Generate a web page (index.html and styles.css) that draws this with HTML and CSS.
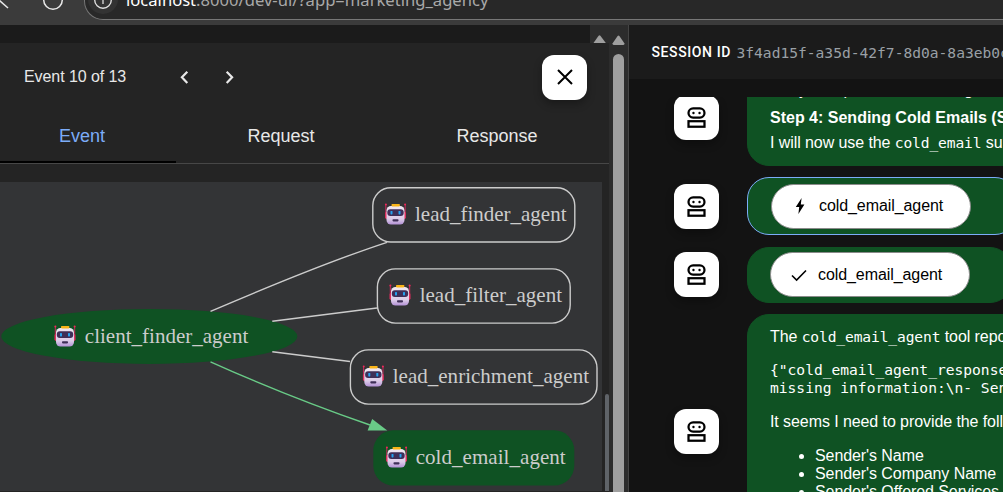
FILE: index.html
```html
<!DOCTYPE html>
<html lang="en">
<head>
  <meta charset="UTF-8">
  <title>Agent Development Kit Dev UI</title>
  <link rel="stylesheet" href="styles.css">
</head>
<body>

  <!-- shared icons -->
  <svg class="defs" width="0" height="0">
    <symbol id="bot" viewBox="0 0 24 24">
      <rect x="4.9" y="3.9" width="14.2" height="8.2" rx="4.1" fill="none" stroke="#000" stroke-width="2"/>
      <circle cx="9.3" cy="8" r="1.05"/>
      <circle cx="14.7" cy="8" r="1.05"/>
      <rect x="4.9" y="15.3" width="14.2" height="4.9" fill="none" stroke="#000" stroke-width="2"/>
    </symbol>
    <symbol id="robot" viewBox="0 0 22 22">
      <path d="M1.3 1v14M20.7 1v14" stroke="#c9285c" stroke-width="1"/>
      <circle cx="1.4" cy="1.6" r="1" fill="#f0285a"/>
      <circle cx="20.6" cy="1.6" r="1" fill="#f0285a"/>
      <rect x=".6" y="9" width="3" height="7" rx="1.4" fill="#e0305f"/>
      <rect x="18.4" y="9" width="3" height="7" rx="1.4" fill="#e0305f"/>
      <rect x="2" y="3" width="18" height="18.5" rx="4.5" fill="url(#face)"/>
      <rect x="7" y="1" width="8.4" height="2.4" rx=".8" fill="#f9b418"/>
      <rect x="2.8" y="6.3" width="16.4" height="6.6" rx="3" fill="#3f2f58"/>
      <rect x="6" y="8" width="2" height="3.4" rx=".6" fill="#25a2f0"/>
      <rect x="14" y="8" width="2" height="3.4" rx=".6" fill="#25a2f0"/>
      <rect x="8" y="16.2" width="6" height="2.2" rx=".8" fill="#3f2f58"/>
    </symbol>
    <linearGradient id="face" x1="0" y1="0" x2="0" y2="1">
      <stop offset="0" stop-color="#f1e8f2"/>
      <stop offset=".7" stop-color="#dccbe8"/>
      <stop offset="1" stop-color="#b391d6"/>
    </linearGradient>
  </svg>

  <header class="browser-bar">
    <svg class="nav-icons" width="84" height="25" fill="none" stroke="#e8e8e8" stroke-width="1.5">
      <path d="M-1 0L8 8"/>
      <circle cx="53" cy="0" r="9.3"/>
    </svg>
    <div class="url-bar">
      <svg class="info" width="36" height="19">
        <circle cx="18" cy="-1" r="15" fill="#333"/>
        <circle cx="18" cy="0" r="8.3" fill="none" stroke="#ddd" stroke-width="1.4"/>
        <path d="M18 -1V4" stroke="#ddd" stroke-width="1.3"/>
      </svg>
      <span class="url"><b>localhost</b>:8000/dev-ui/?app=marketing_agency</span>
    </div>
  </header>

  <main class="app">
    <section class="side">
      <div class="side-top">
        <div class="scroll-up"><svg width="19" height="18"><path d="M3.5 18L8.6 10.8Q9.5 9.8 10.4 10.8L15.8 18z" fill="#9f9f9f"/></svg></div>
      </div>

      <div class="event-nav">
        <span class="event-count">Event 10 of 13</span>
        <svg class="chevron" width="10" height="14" viewBox="0 0 10 14"><path d="M8.3 1.7L2.9 7.3L8.3 13"/></svg>
        <svg class="chevron" width="10" height="14" viewBox="0 0 10 14"><path d="M2.7 1.7L8.1 7.3L2.7 13"/></svg>
        <button class="close"><svg width="16" height="16" viewBox="0 0 16 16"><path d="M1 1L15 15M15 1L1 15" stroke="#000" stroke-width="2"/></svg></button>
      </div>

      <nav class="tabs">
        <a class="tab active">Event</a>
        <a class="tab">Request</a>
        <a class="tab">Response</a>
      </nav>

      <div class="graph">
        <svg width="602" height="309" viewBox="0 182 602 309">
          <ellipse class="filled" cx="149.3" cy="336.4" rx="148" ry="27.5"/>
          <g class="edges">
            <path d="M210.5 311.4C265 288 330 261 387 242.3"/>
            <path d="M272.3 321.2L377 308"/>
            <path d="M272.3 351.8L350 361.5"/>
            <path class="active-edge" d="M210.5 361.8C262 385 315 406 370 425"/>
          </g>
          <path class="arrow" d="M372.2 419L367.6 430.6L387.3 430.6z"/>
          <g class="nodes">
            <rect x="372.8" y="187.8" width="202" height="54.2" rx="18"/>
            <rect x="377.4" y="268.9" width="192.8" height="54.2" rx="18"/>
            <rect x="350.4" y="349.9" width="246.6" height="54.2" rx="18"/>
          </g>
          <rect class="filled" x="373.3" y="430.3" width="201" height="55.3" rx="20"/>

          <use href="#robot" x="54" y="325" width="22" height="22"/>
          <use href="#robot" x="384.5" y="203" width="22" height="22"/>
          <use href="#robot" x="389" y="284" width="22" height="22"/>
          <use href="#robot" x="362.3" y="365" width="22" height="22"/>
          <use href="#robot" x="385.5" y="446" width="22" height="22"/>

          <g class="labels">
            <text x="84.8" y="343" textLength="163.5">client_finder_agent</text>
            <text x="415" y="221.3" textLength="151.5">lead_finder_agent</text>
            <text x="419.7" y="302.3" textLength="142.3">lead_filter_agent</text>
            <text x="392.7" y="383.3" textLength="196.3">lead_enrichment_agent</text>
            <text x="415.7" y="464.3" textLength="150">cold_email_agent</text>
          </g>
        </svg>
        <span class="inner-thumb"></span>
      </div>
    </section>

    <div class="scrollbar">
      <svg width="19" height="28"><path d="M3.5 18.5L8.6 11Q9.5 9.8 10.4 11L15.5 18.5Q15.5 20 14 20H5Q3.5 20 3.5 18.5z" fill="#9f9f9f"/></svg>
      <div class="thumb"></div>
    </div>

    <section class="chat">
      <div class="session">
        <span class="session-label">SESSION ID</span>
        <span class="session-id">3f4ad15f-a35d-42f7-8d0a-8a3eb0c1</span>
      </div>

      <div class="messages">
        <div class="message first">
          <div class="avatar"><svg width="27" height="27"><use href="#bot"/></svg></div>
          <div class="bubble wide intro">
            <p>Okay, this process will change now.</p>
            <p><strong>Step 4: Sending Cold Emails (Sub-agent)</strong></p>
            <p>I will now use the <code>cold_email</code> sub-agent.</p>
          </div>
        </div>

        <div class="message call">
          <div class="avatar"><svg width="27" height="27"><use href="#bot"/></svg></div>
          <div class="bubble selected">
            <div class="pill">
              <svg width="18" height="18" viewBox="0 0 18 18"><path d="M10.6 1L4.8 10H8.2L7.4 17L13.4 7.6H9.8z"/></svg>
              cold_email_agent
            </div>
          </div>
        </div>

        <div class="message result">
          <div class="avatar"><svg width="27" height="27"><use href="#bot"/></svg></div>
          <div class="bubble">
            <div class="pill">
              <svg width="18" height="18" viewBox="0 0 18 18"><path d="M2 9.5L6.6 14L16 4.5" fill="none" stroke="#000" stroke-width="1.6"/></svg>
              cold_email_agent
            </div>
          </div>
        </div>

        <div class="message reply">
          <div class="avatar"><svg width="27" height="27"><use href="#bot"/></svg></div>
          <div class="bubble wide">
            <p>The <code>cold_email_agent</code> tool reported:</p>
            <pre>{"cold_email_agent_response":
missing information:\n- Sender</pre>
            <p>It seems I need to provide the following:</p>
            <ul>
              <li>Sender's Name</li>
              <li>Sender's Company Name</li>
              <li>Sender's Offered Services</li>
            </ul>
          </div>
        </div>
      </div>
    </section>
  </main>

</body>
</html>
```

FILE: styles.css
```css
* {
  box-sizing: border-box;
}

body {
  margin: 0;
  height: 492px;
  display: flex;
  flex-direction: column;
  overflow: hidden;
  background: #131313;
  color: #e8e8e8;
  font-family: "Liberation Sans", Arial, sans-serif;
  font-size: 16px;
}

.defs {
  position: absolute;
}

svg {
  display: block;
  flex: none;
}

/* Browser bar */
.browser-bar {
  display: flex;
  flex: none;
  height: 25px;
  background: #3b3b3b;
}

.url-bar {
  flex: 1;
  display: flex;
  height: 20px;
  margin-right: -20px;
  background: #282828;
  border: 1px solid #777;
  border-top: 0;
  border-bottom-left-radius: 19px;
  overflow: hidden;
}

.url {
  margin: -13px 0 0 5px;
  font-family: "Noto Sans", sans-serif;
  font-size: 16.6px;
  line-height: 26px;
  color: #a9a9a9;
  white-space: nowrap;
}

.url b {
  font-weight: normal;
  color: #fff;
}

.app {
  flex: 1;
  display: flex;
  min-height: 0;
}

/* Event panel */
.side {
  width: 609px;
  flex: none;
  background: #242424;
}

.side-top {
  display: flex;
  justify-content: flex-end;
  height: 18px;
  background: #1b1b1b;
}

.scroll-up {
  background: #2c2c2c;
}

.event-nav {
  display: flex;
  align-items: center;
  height: 68px;
  padding: 0 22px 0 24px;
}

.event-count {
  width: 155px;
  letter-spacing: -0.08px;
}

.chevron {
  margin-right: 35px;
  fill: none;
  stroke: #e8e8e8;
  stroke-width: 2.2;
}

.close {
  display: flex;
  align-items: center;
  justify-content: center;
  width: 45px;
  height: 45px;
  margin-left: auto;
  padding: 0;
  border: 0;
  border-radius: 12px;
  background: #fff;
  box-shadow: 0 4px 8px rgba(0, 0, 0, 0.3);
}

.tabs {
  display: flex;
  height: 53px;
  border-bottom: 1px solid #474747;
}

.tab {
  width: 216px;
  padding-top: 15px;
  font-size: 18px;
  line-height: 21px;
  text-align: center;
}

.tab:first-child {
  width: 176px;
  margin-right: -3px;
  padding-right: 12px;
}

.tab.active {
  color: #7cacf8;
  border-bottom: 2px solid #000;
}

.graph {
  display: flex;
  align-items: flex-end;
  justify-content: space-between;
  margin-top: 18px;
}

.graph > svg {
  background: #333436;
}

.filled {
  fill: #0f5223;
}

.edges path,
.nodes rect {
  fill: none;
  stroke: #ccc;
  stroke-width: 1.4;
}

.edges .active-edge {
  stroke: #69cb87;
}

.arrow {
  fill: #69cb87;
}

.labels {
  font-family: "Liberation Serif", "Times New Roman", serif;
  font-size: 21px;
  fill: #ccc;
}

.inner-thumb {
  width: 4px;
  height: 97px;
  border-radius: 2px 2px 0 0;
  background: #5f6368;
}

.scrollbar {
  width: 20px;
  flex: none;
  background: #2c2c2c;
  border-right: 1px solid #444;
}

.thumb {
  width: 11px;
  height: 460px;
  margin: 1px 0 0 4px;
  border-radius: 6px;
  background: #9f9f9f;
}

/* Chat */
.chat {
  flex: 1;
  min-width: 0;
  overflow: hidden;
}

.session {
  display: flex;
  align-items: center;
  height: 54px;
  padding-left: 22.5px;
  background: #1b1b1b;
  white-space: nowrap;
}

.session-label {
  flex: none;
  width: 85px;
  color: #fff;
  font: 500 14px Roboto, sans-serif;
  letter-spacing: 0.6px;
}

.session-id {
  color: #9aa0a6;
  font-family: "DejaVu Sans Mono", monospace;
  font-size: 14.6px;
}

.messages {
  height: 395px;
  margin-top: 18px;
  overflow: hidden;
}

.message {
  display: flex;
  align-items: center;
  padding-left: 45px;
  margin-bottom: 12px;
}

.message.first {
  height: 97px;
  margin-top: -28px;
  margin-bottom: 11px;
}

.avatar {
  display: flex;
  align-items: center;
  justify-content: center;
  flex: none;
  width: 45px;
  height: 45px;
  margin-right: 28px;
  border-radius: 12px;
  background: #fff;
  box-shadow: 0 4px 8px rgba(0, 0, 0, 0.3);
}

.bubble {
  flex: none;
  width: 265px;
  height: 100%;
  padding: 6px 22px;
  border: 1px solid #0f5223;
  border-radius: 22px;
  background: #0f5223;
  color: #fff;
  letter-spacing: -0.08px;
  white-space: nowrap;
}

.bubble.wide {
  width: 500px;
}

.intro {
  padding-top: 7px;
}

.intro p {
  margin: 0;
  line-height: 25px;
}

.intro p:first-child {
  margin-bottom: 3px;
}

.intro strong {
  letter-spacing: 0;
}

.call {
  height: 58px;
}

.call .bubble {
  width: 270px;
  padding-left: 23px;
}

.bubble.selected {
  border-color: #7cacf8;
}

.result {
  height: 56px;
  margin-bottom: 11px;
}

.result .avatar {
  margin-bottom: 1px;
}

.result .bubble {
  padding-top: 4px;
}

.pill {
  display: flex;
  align-items: center;
  gap: 10px;
  width: 200px;
  height: 45px;
  padding-left: 19px;
  border: 1px solid #8a8a8a;
  border-radius: 23px;
  background: #fff;
  color: #000;
}

.call .pill {
  padding-bottom: 2px;
}

.reply {
  height: 235px;
}

.reply .bubble {
  padding-top: 13px;
}

.reply p {
  margin: 0 0 15px;
  line-height: 18px;
}

.reply pre {
  margin: 0 0 16px;
  line-height: 18px;
}

code,
pre {
  font-family: "DejaVu Sans Mono", monospace;
  font-size: 14.6px;
  letter-spacing: 0;
}

code {
  line-height: 1;
  letter-spacing: -0.12px;
}

.reply ul {
  margin: 16px 0 0;
  padding-left: 45px;
  line-height: 18px;
}
```
